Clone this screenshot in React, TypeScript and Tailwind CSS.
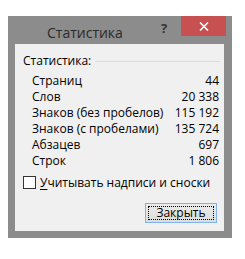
import React from "react";

const rows: [string, string][] = [
  ["Страниц", "44"],
  ["Слов", "20 338"],
  ["Знаков (без пробелов)", "115 192"],
  ["Знаков (с пробелами)", "135 724"],
  ["Абзацев", "697"],
  ["Строк", "1 806"],
];

export default function App() {
  return (
    <div
      className="w-[245px] h-[259px] bg-white pl-[8px] pt-[16px]"
      style={{ fontFamily: '"Open Sans", "Noto Sans", sans-serif' }}
    >
      <div className="w-[224px] h-[222px] bg-[#8c8c8c] flex flex-col">
        <div className="h-[28px] flex items-start relative">
          <div className="absolute left-[39px] top-[5px] text-[14px] leading-[24px] text-[#2a2a2a]">Статистика</div>
          <div className="absolute left-[153px] top-[2px] text-[13px] font-bold leading-[20px] text-[#333]">?</div>
          <div className="absolute left-[173px] top-0 w-[45px] h-[20px] bg-[#c75050] flex items-center justify-center">
            <svg width="10" height="9" viewBox="0 0 10 9">
              <path d="M1 0.5 L9 8.5 M9 0.5 L1 8.5" stroke="white" strokeWidth="1.6" />
            </svg>
          </div>
        </div>
        <div className="ml-[7px] mr-[8px] h-[187px] bg-[#f0f0f0] flex flex-col text-[12px] text-black">
          <div className="mt-[9px] h-[16px] flex items-center pl-[8px] pr-[4px]">
            <span className="leading-[16px]">Статистика:</span>
            <div className="flex-1 ml-[4px] h-px bg-[#dcdcdc]" />
          </div>
          <div className="mt-[4px] flex flex-col pl-[17px] pr-[5px]">
            {rows.map(([k, v]) => (
              <div key={k} className="h-[16px] flex items-center justify-between leading-[16px]">
                <span>{k}</span>
                <span>{v}</span>
              </div>
            ))}
          </div>
          <div className="mt-[7px] flex items-center pl-[8px] h-[13px]">
            <div className="w-[13px] h-[13px] border border-[#333] bg-white" />
            <span className="ml-[4px] leading-[16px]">
              <span className="underline underline-offset-2">У</span>читывать надписи и сноски
            </span>
          </div>
          <div className="mt-[14px] flex justify-end pr-[7px]">
            <div className="w-[72px] h-[20px] border border-[#7eb4ea] bg-gradient-to-b from-[#ececec] to-[#dcdcdc] p-[2px]">
              <div className="w-full h-full border border-dotted border-black flex items-center justify-center leading-[14px]">
                Закрыть
              </div>
            </div>
          </div>
        </div>
      </div>
    </div>
  );
}
